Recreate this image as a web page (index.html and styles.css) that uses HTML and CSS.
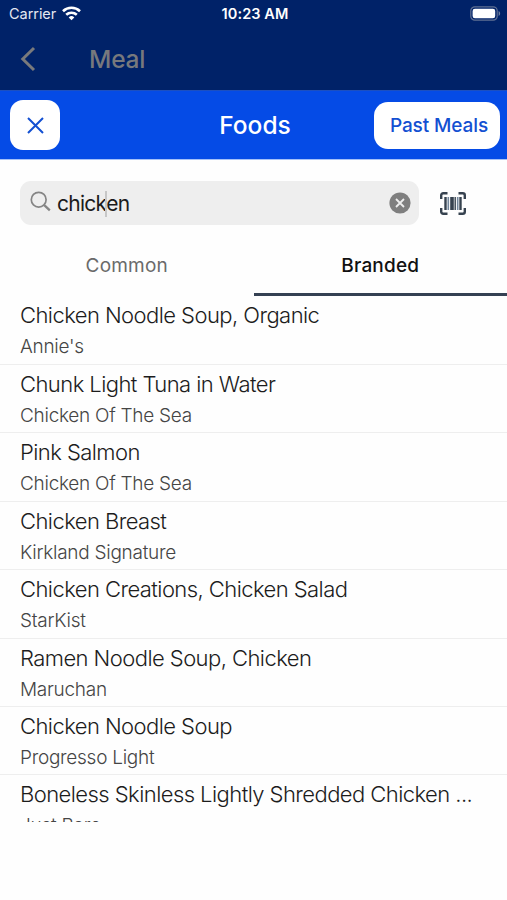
FILE: index.html
```html
<!DOCTYPE html>
<html lang="en">
<head>
<meta charset="utf-8">
<title>Foods</title>
<link rel="stylesheet" href="styles.css">
</head>
<body>
<div class="backdrop">
  <div class="status">
    <div class="carrier"><span>Carrier</span>
      <svg width="19" height="15" viewBox="0 0 19 15" fill="none" stroke="#fff" stroke-width="2.6"><path d="M1 5.2a12.3 12.3 0 0 1 17 0"/><path d="M4.2 8.800a7.700 7.700 0 0 1 10.600 0"/><path d="M9.500 14.300 6.700 11.400a4 4 0 0 1 5.600 0z" fill="#fff" stroke="none"/></svg>
    </div>
    <span class="time">10:23 AM</span>
    <svg class="battery" width="31" height="15" viewBox="0 0 31 15"><rect x=".8" y=".8" width="26.400" height="13.400" rx="4" fill="none" stroke="#5f7093" stroke-width="1.200"/><rect x="2.600" y="2.700" width="22.600" height="9.600" rx="2.300" fill="#fff"/><path d="M28.600 5v5c2-.8 2-4.200 0-5z" fill="#71809f"/></svg>
  </div>
  <div class="meal">
    <svg width="16" height="26" viewBox="0 0 16 26" fill="none" stroke="#797a7c" stroke-width="3"><path d="M14 2 2.800 13 14 24"/></svg>
    <span>Meal</span>
  </div>
</div>
<header class="header">
  <button class="close" aria-label="Close"><svg width="17" height="17" viewBox="0 0 17 17" fill="none" stroke="#1350d2" stroke-width="2"><path d="m1 1 15 15M16 1 1 16"/></svg></button>
  <h1>Foods</h1>
  <button class="past">Past Meals</button>
</header>
<div class="search">
  <div class="field">
    <svg class="glass" width="22" height="22" viewBox="0 0 22 22" fill="none" stroke="#858585"><circle cx="8.700" cy="8.700" r="7.400" stroke-width="1.700"/><path d="m14.200 14.200 5.600 5.200" stroke-width="2.300"/></svg>
    <span class="query">chick<i class="caret"></i>en</span>
    <svg width="22" height="22" viewBox="0 0 22 22"><circle cx="11" cy="11" r="10.600" fill="#7f7f7f"/><path d="m7 7 8 8M15 7l-8 8" stroke="#eee" stroke-width="1.800"/></svg>
  </div>
  <svg class="scan" width="26" height="23" viewBox="0 0 26 23" fill="none" stroke="#36424f"><path d="M1.200 7V3.200a2 2 0 0 1 2-2H7.500M18.500 1.200h4.300a2 2 0 0 1 2 2V7M24.800 16v3.800a2 2 0 0 1-2 2h-4.300M7.500 21.800H3.200a2 2 0 0 1-2-2V16" stroke-width="2.400"/><path d="M5.500 5v13M20.500 5v13" stroke-width="2.400"/><path d="M8.300 5v13M17.700 5v13" stroke-width="1.600" stroke="#72869b"/><path d="M12 5v13" stroke-width="3.600"/><path d="M15.200 5v13" stroke-width="1.400"/></svg>
</div>
<nav class="tabs"><span class="tab">Common</span><span class="tab active">Branded</span></nav>
<main class="list">
  <div class="item"><div class="name">Chicken Noodle Soup, Organic</div><div class="brand">Annie's</div></div>
  <div class="item"><div class="name">Chunk Light Tuna in Water</div><div class="brand">Chicken Of The Sea</div></div>
  <div class="item"><div class="name">Pink Salmon</div><div class="brand">Chicken Of The Sea</div></div>
  <div class="item"><div class="name">Chicken Breast</div><div class="brand">Kirkland Signature</div></div>
  <div class="item"><div class="name">Chicken Creations, Chicken Salad</div><div class="brand">StarKist</div></div>
  <div class="item"><div class="name">Ramen Noodle Soup, Chicken</div><div class="brand">Maruchan</div></div>
  <div class="item"><div class="name">Chicken Noodle Soup</div><div class="brand">Progresso Light</div></div>
  <div class="item"><div class="name">Boneless Skinless Lightly Shredded Chicken ...</div><div class="brand">Just Bare</div></div>
</main>
</body>
</html>
```
FILE: styles.css
```css
* { box-sizing: border-box; }
body { margin: 0; height: 900px; overflow: hidden; background: #fefefe; font-family: Inter, "Liberation Sans", sans-serif; color: #222; }
svg { display: block; flex: none; }
button { border: 0; padding: 0; font-family: inherit; background: #fff; }
.backdrop { height: 90px; background: #002268; }
.status { height: 27px; display: grid; grid-template-columns: 1fr auto 1fr; align-items: center; padding: 0 6px 0 9px; color: #fff; }
.carrier { display: flex; align-items: center; gap: 6px; font-size: 14.500px; letter-spacing: -.05px; color: #e4e8f1; }
.time { font-size: 14.500px; font-weight: 600; letter-spacing: .1px; }
.battery { justify-self: end; }
.meal { height: 63px; display: flex; align-items: center; padding: 1px 0 0 20px; gap: 53px; color: #77797d; font-size: 24.500px; font-weight: 500; letter-spacing: -.2px; }
.header { height: 70px; border-top: 1px solid #1c4fc0; border-bottom: 1px solid #a5c1f8; background: #054be6; display: grid; grid-template-columns: 1fr auto 1fr; align-items: center; padding: 0 7px 0 10px; }
.close { width: 50px; height: 50px; border-radius: 13px; display: grid; place-items: center; }
.header h1 { margin: 0; color: #fff; font-size: 24.500px; font-weight: 500; }
.past { justify-self: end; width: 126px; height: 47px; border-radius: 14px; color: #1350d2; font-size: 19px; font-weight: 500; padding-left: 4px; letter-spacing: -.1px; }
.search { display: flex; align-items: center; height: 44px; margin: 21px 0 0 20px; gap: 21px; }
.field { width: 399px; height: 44px; border-radius: 11px; background: #eee; display: flex; align-items: center; padding: 0 8px 0 10px; }
.glass { margin: -3px 5px 0 0; }
.query { flex: 1; font-size: 21px; line-height: 28px; padding-top: 2px; letter-spacing: -.75px; color: #1b1b1b; }
.caret { display: inline-block; width: 2px; height: 26px; margin: -2px -1px 0; vertical-align: middle; background: #c7c7c7; }
.tabs { display: flex; height: 71px; }
.tab { flex: 1; text-align: center; line-height: 82px; font-size: 19px; letter-spacing: .2px; color: #6a6a6a; }
.active { color: #111; font-weight: 500; border-bottom: 3px solid #354153; }
.list { height: 526px; overflow: hidden; }
.item { height: 68.400px; border-bottom: 1px solid #eee; padding: 4px 0 0 20px; white-space: nowrap; }
.item:first-child { height: 69px; }
.name { height: 30px; line-height: 30px; font-size: 22px; font-weight: 300; letter-spacing: -.56px; color: #1c1c1c; }
.brand { height: 34px; line-height: 34px; font-size: 19px; font-weight: 300; letter-spacing: -.27px; color: #454545; }
```
